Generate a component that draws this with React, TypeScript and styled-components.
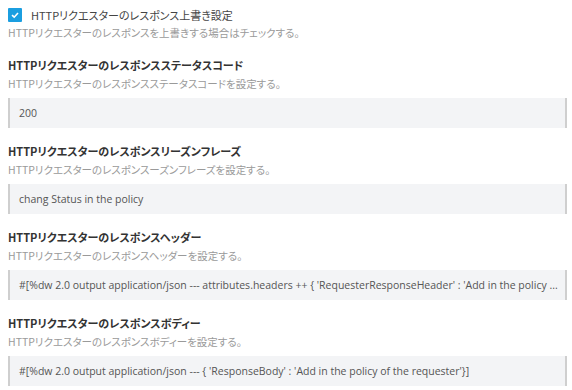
import styled, { createGlobalStyle } from 'styled-components';

const GlobalStyle = createGlobalStyle`
	body {
		margin: 0;
		background: #fff;
		font-family: 'Open Sans', 'Noto Sans CJK JP', sans-serif;
	}
`;

const Page = styled.div`
	width: 559px;
	padding: 6px 0 0 8px;
	font-family: 'Noto Sans CJK JP', sans-serif;
	font-feature-settings: 'palt';
`;

const CheckRow = styled.label`
	display: flex;
	align-items: center;
	gap: 9px;
	height: 17px;
	font-size: 11px;
	color: #444;
`;

const CheckBox = styled.span`
	width: 14px;
	height: 14px;
	border-radius: 1px;
	background: #1b9ee0;
	display: flex;
	align-items: center;
	justify-content: center;
`;

const Desc = styled.div`
	font-size: 10.5px;
	line-height: 18px;
	color: #9a9a9a;
	margin-top: 1px;
`;

const Section = styled.section`
	margin-top: 14px;
`;

const Heading = styled.div`
	font-size: 11px;
	line-height: 18px;
	font-weight: 700;
	color: #333;
`;

const Field = styled.div`
	margin-top: 5px;
	height: 30px;
	box-sizing: border-box;
	background: #f3f4f6;
	border-left: 2px solid #cfcfcf;
	border-right: 2px solid #cfcfcf;
	padding: 0 0 0 9px;
	display: flex;
	align-items: center;
	font-family: 'Open Sans', sans-serif;
	font-feature-settings: normal;
	font-size: 10.5px;
	color: #555;
	white-space: nowrap;
	overflow: hidden;
`;

const fields = [
	{
		title: 'HTTPリクエスターのレスポンスステータスコード',
		desc: 'HTTPリクエスターのレスポンスステータスコードを設定する。',
		value: '200',
	},
	{
		title: 'HTTPリクエスターのレスポンスリーズンフレーズ',
		desc: 'HTTPリクエスターのレスポンスーズンフレーズを設定する。',
		value: 'chang Status in the policy',
	},
	{
		title: 'HTTPリクエスターのレスポンスヘッダー',
		desc: 'HTTPリクエスターのレスポンスヘッダーを設定する。',
		value: "#[%dw 2.0 output application/json --- attributes.headers ++ { 'RequesterResponseHeader' : 'Add in the policy ...",
	},
	{
		title: 'HTTPリクエスターのレスポンスボディー',
		desc: 'HTTPリクエスターのレスポンスボディーを設定する。',
		value: "#[%dw 2.0 output application/json --- { 'ResponseBody' : 'Add in the policy of the requester'}]",
	},
];

const App = () => {
	return (
		<Page>
			<GlobalStyle />
			<CheckRow>
				<CheckBox>
					<svg width='10' height='10' viewBox='0 0 10 10'>
						<path d='M2 5.2 L4.2 7.2 L8 3' fill='none' stroke='#fff' strokeWidth='1.6' />
					</svg>
				</CheckBox>
				HTTPリクエスターのレスポンス上書き設定
			</CheckRow>
			<Desc>HTTPリクエスターのレスポンスを上書きする場合はチェックする。</Desc>
			{fields.map((f) => (
				<Section key={f.title}>
					<Heading>{f.title}</Heading>
					<Desc>{f.desc}</Desc>
					<Field>{f.value}</Field>
				</Section>
			))}
		</Page>
	);
};

export default App;
